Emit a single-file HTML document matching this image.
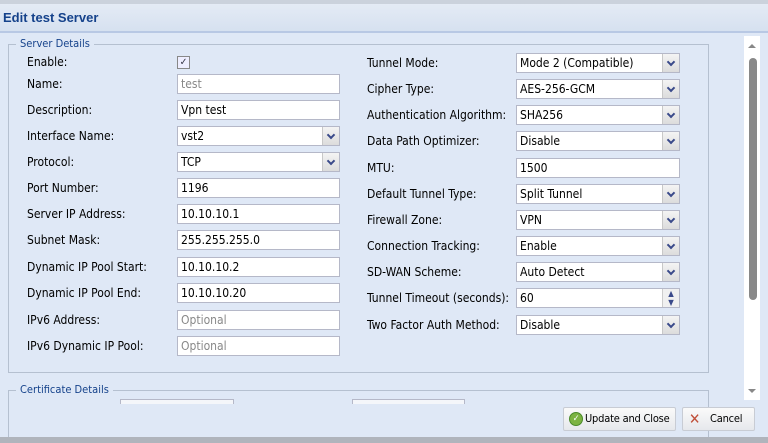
<!DOCTYPE html>
<html style="overflow:hidden;height:443px"><head><style>
body{margin:0;width:768px;height:443px;overflow:hidden;background:#dfe8f6;font-family:"DejaVu Sans Condensed","Liberation Sans",sans-serif;font-size:12px;color:#000;position:relative}
.a{position:absolute}
.lbl{position:absolute;font-size:12px;line-height:14px}
.in{position:absolute;height:20px;background:#fff;border:1px solid #b5b8c8;box-sizing:border-box;padding-left:3px;line-height:19px;font-size:12px;white-space:nowrap}
.ph{color:#888}
.sel .ar{position:absolute;right:0;top:0;width:16px;height:18px;background:linear-gradient(#f4f4f4,#dcdcdc);border-left:1px solid #c8c8c8}
.sel .ar:after{content:"";position:absolute;left:5px;top:5px;width:4px;height:4px;border-right:2px solid #3a4a8a;border-bottom:2px solid #3a4a8a;transform:rotate(45deg)}
.btn{position:absolute;height:22px;border:1px solid #c8ccd4;background:linear-gradient(#fafafa,#e6e8ec);border-radius:2px;line-height:22px;white-space:nowrap;font-size:11px;letter-spacing:-0.2px}
</style></head><body>
<div class="a" style="left:0;top:0;width:768px;height:4px;background:#cbd2dc"></div>
<div class="a" style="left:0;top:4px;width:768px;height:27px;background:linear-gradient(#e4ebf5,#d6e1f0);border-bottom:2px solid #b8c8e4"></div>
<div class="a" style="left:3px;top:10px;font-weight:bold;color:#15428b;font-size:13px;font-family:'Liberation Sans',sans-serif">Edit test Server</div>
<div class="a" style="left:8px;top:44px;width:699px;height:327px;border:1px solid #b5c0d0"></div>
<div class="a" style="left:16px;top:37px;background:#dfe8f6;padding:0 4px;color:#15428b;font-size:11px">Server Details</div>
<div class="a" style="left:8px;top:390px;width:699px;height:46px;border:1px solid #b5c0d0;border-bottom:0"></div>
<div class="a" style="left:16px;top:383px;background:#dfe8f6;padding:0 4px;color:#15428b;font-size:11px">Certificate Details</div>
<div class="a" style="left:120px;top:399px;width:112px;height:4px;background:#f4f6fa;border:1px solid #b5b8c8;border-bottom:0"></div>
<div class="a" style="left:352px;top:399px;width:111px;height:4px;background:#f4f6fa;border:1px solid #b5b8c8;border-bottom:0"></div>
<div class="a" style="left:744px;top:36px;width:16px;height:364px;background:#fff"></div>
<div class="a" style="left:749px;top:58px;width:8px;height:242px;background:#888;border-radius:4px"></div>
<div class="a" style="left:748px;top:44px;width:0;height:0;border:4px solid transparent;border-bottom-color:#888;border-top:0"></div>
<div class="a" style="left:748px;top:389px;width:0;height:0;border:4px solid transparent;border-top-color:#888;border-bottom:0"></div>

<div class="lbl" style="left:27px;top:55px">Enable:</div>
<div class="a" style="left:177px;top:56px;width:11px;height:11px;border:1px solid #888;background:#eef;font-size:10px;line-height:11px;text-align:center;color:#334">✓</div>
<div class="lbl" style="left:27px;top:77px">Name:</div><div class="in ph" style="left:177px;top:74px;width:163px">test</div>
<div class="lbl" style="left:27px;top:103px">Description:</div><div class="in" style="left:177px;top:100px;width:163px">Vpn test</div>
<div class="lbl" style="left:27px;top:129px">Interface Name:</div><div class="in sel" style="left:177px;top:126px;width:163px">vst2<span class="ar"></span></div>
<div class="lbl" style="left:27px;top:155px">Protocol:</div><div class="in sel" style="left:177px;top:152px;width:163px">TCP<span class="ar"></span></div>
<div class="lbl" style="left:27px;top:181px">Port Number:</div><div class="in" style="left:177px;top:178px;width:163px">1196</div>
<div class="lbl" style="left:27px;top:207px">Server IP Address:</div><div class="in" style="left:177px;top:204px;width:163px">10.10.10.1</div>
<div class="lbl" style="left:27px;top:233px">Subnet Mask:</div><div class="in" style="left:177px;top:230px;width:163px">255.255.255.0</div>
<div class="lbl" style="left:27px;top:260px">Dynamic IP Pool Start:</div><div class="in" style="left:177px;top:257px;width:163px">10.10.10.2</div>
<div class="lbl" style="left:27px;top:286px">Dynamic IP Pool End:</div><div class="in" style="left:177px;top:283px;width:163px">10.10.10.20</div>
<div class="lbl" style="left:27px;top:313px">IPv6 Address:</div><div class="in ph" style="left:177px;top:310px;width:163px">Optional</div>
<div class="lbl" style="left:27px;top:339px">IPv6 Dynamic IP Pool:</div><div class="in ph" style="left:177px;top:336px;width:163px">Optional</div>

<div class="lbl" style="left:367px;top:56px">Tunnel Mode:</div><div class="in sel" style="left:516px;top:53px;width:164px">Mode 2 (Compatible)<span class="ar"></span></div>
<div class="lbl" style="left:367px;top:82px">Cipher Type:</div><div class="in sel" style="left:516px;top:79px;width:164px">AES-256-GCM<span class="ar"></span></div>
<div class="lbl" style="left:367px;top:108px">Authentication Algorithm:</div><div class="in sel" style="left:516px;top:105px;width:164px">SHA256<span class="ar"></span></div>
<div class="lbl" style="left:367px;top:134px">Data Path Optimizer:</div><div class="in sel" style="left:516px;top:131px;width:164px">Disable<span class="ar"></span></div>
<div class="lbl" style="left:367px;top:161px">MTU:</div><div class="in" style="left:516px;top:158px;width:164px">1500</div>
<div class="lbl" style="left:367px;top:187px">Default Tunnel Type:</div><div class="in sel" style="left:516px;top:184px;width:164px">Split Tunnel<span class="ar"></span></div>
<div class="lbl" style="left:367px;top:213px">Firewall Zone:</div><div class="in sel" style="left:516px;top:210px;width:164px">VPN<span class="ar"></span></div>
<div class="lbl" style="left:367px;top:239px">Connection Tracking:</div><div class="in sel" style="left:516px;top:236px;width:164px">Enable<span class="ar"></span></div>
<div class="lbl" style="left:367px;top:265px">SD-WAN Scheme:</div><div class="in sel" style="left:516px;top:262px;width:164px">Auto Detect<span class="ar"></span></div>
<div class="lbl" style="left:367px;top:291px">Tunnel Timeout (seconds):</div><div class="in" style="left:516px;top:288px;width:164px">60<span class="a" style="right:0;top:0;width:16px;height:18px;background:#f0f0f0;border-left:1px solid #ccc;font-size:8px;line-height:9px;text-align:center;color:#3a4a8a">▲<br>▼</span></div>
<div class="lbl" style="left:367px;top:318px">Two Factor Auth Method:</div><div class="in sel" style="left:516px;top:315px;width:164px">Disable<span class="ar"></span></div>

<div class="btn" style="left:563px;top:407px;width:111px">
<span class="a" style="left:5px;top:4px;width:12px;height:12px;border-radius:50%;background:#7cb342;border:1px solid #4a8a2a;color:#fff;font-size:9px;line-height:12px;text-align:center">✓</span>
<span class="a" style="left:21px;top:0">Update and Close</span></div>
<div class="btn" style="left:682px;top:407px;width:71px">
<span class="a" style="left:6px;top:0;color:#c0503a;font-weight:bold;font-size:15px">✕</span>
<span class="a" style="left:27px;top:0">Cancel</span></div>
<div class="a" style="left:0;top:437px;width:768px;height:6px;background:#b0b4bc"></div>
</body></html>
